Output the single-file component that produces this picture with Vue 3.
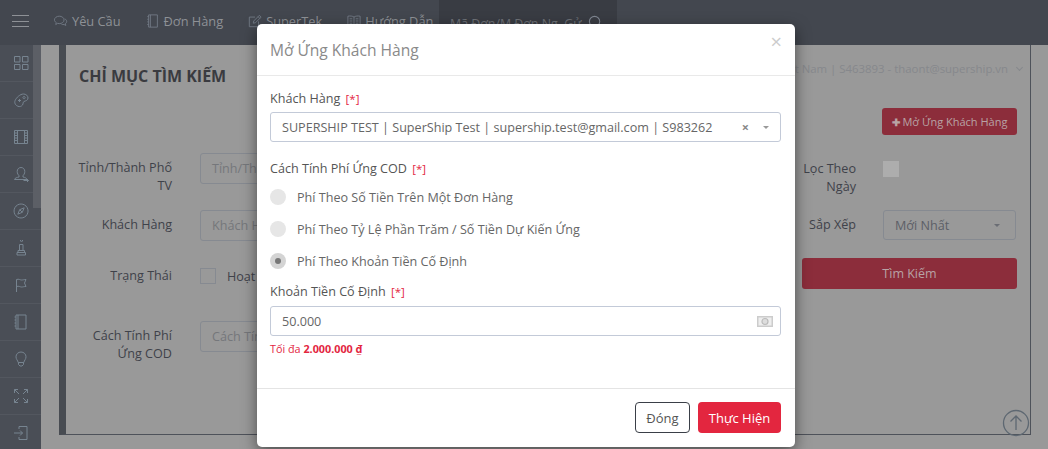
<script setup>
const navItems = [
  { label: 'Yêu Cầu', icon: 'chat' },
  { label: 'Đơn Hàng', icon: 'book' },
  { label: 'SuperTek', icon: 'edit' },
  { label: 'Hướng Dẫn', icon: 'guide' }
]

const sideIcons = ['grid', 'palette', 'film', 'user', 'compass', 'chess', 'flag', 'book', 'bulb', 'expand', 'login']

const iconPaths = {
  chat: 'M6 2.500c3 0 5.500 1.900 5.500 4.300S9 11 6 11c-.7 0-1.300-.1-1.900-.3L2 12l.5-2.300C1.300 8.900.5 7.900.5 6.800.5 4.400 3 2.500 6 2.500zM12.300 5.500c1.300.7 2.200 1.800 2.200 3 0 1-.6 1.900-1.500 2.600l.5 2-2-1.100c-1 .2-2 .1-2.900-.2',
  book: 'M3 1h10v14H3zM1.500 3H3M1.500 6H3M1.500 9H3M1.500 12H3M5 1v14',
  edit: 'M12 8.500V14.500H1.500V3.500H8M6 10.500l.5-2.500L13 1.500l2 2L8.500 10zM11.500 3l2 2',
  guide: 'M8 3.500C6.500 2.300 3.500 2 1 2.500v10.500c2.500-.5 5.500-.2 7 1 1.500-1.200 4.500-1.500 7-1V2.500C12.500 2 9.500 2.300 8 3.500zM8 3.500V14M3 5.500h3M3 8h3M3 10.500h3M10 5.500h3M10 8h3M10 10.500h3',
  grid: 'M1.500 1.500h5.500v5.500H1.500zM9.500 1.500h5.500v5.500H9.500zM1.500 9.500h5.500v5H1.500zM9.500 9.500h5.500v5H9.500z',
  palette: 'M10.500 2c2.500 0 4.500 1.800 4.500 4 0 2.500-2.500 2.800-4 3.500-1.300.6-.5 2-1.500 3.500-1 1.400-3 2-4.500 1.300C2.500 13.300 1 11 2.200 8.300 3.300 5.800 7 2 10.500 2zM5 8.500h3M6.500 7v3M11 4.500a1.100 1.100 0 1 0 .1 0z',
  film: 'M1.500 1.500h13v13h-13zM4.500 1.500v13M11.500 1.500v13M1.500 4h3M1.500 6.500h3M1.500 9h3M1.500 11.500h3M11.500 4h3M11.500 6.500h3M11.500 9h3M11.500 11.500h3',
  user: 'M8 1.500c2.300 0 3.800 1.700 3.800 4 0 2-1 3.400-1.800 4.200v1.300c2 .5 3.500.8 4 2.500H1.500c.5-1.700 2.500-2 4.500-2.500V9.700C5.200 8.900 4.200 7.500 4.200 5.500c0-2.300 1.500-4 3.800-4zM10.500 14.500h5M14 13l1.500 1.500L14 16',
  compass: 'M8 1a7 7 0 1 0 .1 0zM11.200 4.800L9.300 9.300 4.800 11.200 6.700 6.700zM6.700 6.700l2.600 2.600',
  chess: 'M8.500 1.500a1 1 0 1 1 .1 0zM6.500 4.500h3.500v6H6.500zM5 10.500h6.500v2H5zM4 12.500h8.500V15H4z',
  flag: 'M3.500 15V2.500c2.500-.8 3.500.5 5 .5s2.500-.5 4.500-.5L11.500 6l1.500 3.500c-2 0-3 .5-4.500.5s-2.500-1.300-5-.5',
  bulb: 'M8 1c2.800 0 5 2.100 5 4.800 0 2.400-1.700 3.500-2.200 5.700H5.200C4.700 9.300 3 8.200 3 5.800 3 3.100 5.200 1 8 1zM5.500 11.500v2L7 15h2l1.500-1.500v-2',
  expand: 'M1.500 5V1.500H5M1.500 1.500L6 6M14.500 5V1.500H11M14.500 1.500L10 6M1.500 11v3.500H5M1.500 14.500L6 10M14.500 11v3.500H11M14.500 14.500L10 10',
  login: 'M6 4V1.500h8v13H6V12M1 8h8.500M7 5.500L9.500 8 7 10.500'
}
</script>

<template>
  <div class="page">
    <header class="topbar">
      <button class="burger" type="button"><span></span><span></span><span></span></button>
      <nav class="nav">
        <a v-for="item in navItems" :key="item.label" class="nav__item">
          <svg class="nav__icon" viewBox="0 0 16 16"><path :d="iconPaths[item.icon]" /></svg>
          {{ item.label }}
        </a>
      </nav>
      <div class="search">
        <span class="search__text">Mã Đơn/M Đơn Ng. Gử</span>
        <svg class="search__icon" viewBox="0 0 16 16"><circle cx="7" cy="7" r="5.500" /><path d="M11 11l4 4" /></svg>
      </div>
    </header>

    <div class="layout">
      <aside class="sidebar">
        <div class="sidebar__scroll"></div>
        <div v-for="(icon, i) in sideIcons" :key="i" class="sidebar__item">
          <svg viewBox="0 0 16 16"><path :d="iconPaths[icon]" /></svg>
        </div>
      </aside>

      <main class="main">
        <section class="card">
          <div class="card__head">
            <h2 class="card__title">CHỈ MỤC TÌM KIẾM</h2>
            <div class="account">Việt Nam | S463893 - thaont@supership.vn <span class="account__caret"></span></div>
          </div>
          <div class="card__action">
            <button class="btn-red btn-red--small" type="button"><b class="plus">✚</b> Mở Ứng Khách Hàng</button>
          </div>
          <div class="filters">
            <div class="filters__col">
              <div class="row row--first">
                <label class="row__label">Tỉnh/Thành Phố<br />TV</label>
                <div class="fake-input">Tỉnh/Thà</div>
              </div>
              <div class="row">
                <label class="row__label">Khách Hàng</label>
                <div class="fake-input">Khách Hàng</div>
              </div>
              <div class="row row--check">
                <label class="row__label">Trạng Thái</label>
                <span class="checkbox"></span>
                <span class="check-text">Hoạt Động</span>
              </div>
              <div class="row row--last">
                <label class="row__label">Cách Tính Phí Ứng COD</label>
                <div class="fake-input">Cách Tính</div>
              </div>
            </div>
            <div class="filters__right">
              <div class="rrow rrow--date">
                <label class="rrow__label">Lọc Theo Ngày</label>
                <span class="checkbox checkbox--fill"></span>
              </div>
              <div class="rrow rrow--sort">
                <label class="rrow__label">Sắp Xếp</label>
                <div class="sort">Mới Nhất<span class="caret"></span></div>
              </div>
              <button class="btn-red btn-red--wide" type="button">Tìm Kiếm</button>
            </div>
          </div>
        </section>
        <div class="to-top">
          <svg viewBox="0 0 28 28"><circle cx="14" cy="14" r="12.500" /><path d="M14 21V7M8.500 12.500L14 7l5.500 5.500" /></svg>
        </div>
      </main>
    </div>

    <div class="modal-wrap">
      <div class="modal">
        <div class="modal__head">
          <h3 class="modal__title">Mở Ứng Khách Hàng</h3>
          <span class="modal__close">×</span>
        </div>
        <div class="modal__body">
          <div class="field-label">Khách Hàng <em>[*]</em></div>
          <div class="select">
            <span class="select__text">SUPERSHIP TEST | SuperShip Test | supership.test@gmail.com | S983262</span>
            <span class="select__clear">×</span>
            <span class="caret caret--modal"></span>
          </div>

          <div class="field-label field-label--fee">Cách Tính Phí Ứng COD <em>[*]</em></div>
          <div class="radio"><span class="radio__dot"></span>Phí Theo Số Tiền Trên Một Đơn Hàng</div>
          <div class="radio"><span class="radio__dot"></span>Phí Theo Tỷ Lệ Phần Trăm / Số Tiền Dự Kiến Ứng</div>
          <div class="radio"><span class="radio__dot radio__dot--on"></span>Phí Theo Khoản Tiền Cố Định</div>

          <div class="field-label field-label--amount">Khoản Tiền Cố Định <em>[*]</em></div>
          <div class="select">
            <span class="select__text">50.000</span>
            <svg class="money" viewBox="0 0 16 11">
              <rect x="0" y="0" width="16" height="11" fill="#ccc" />
              <rect x="1.500" y="1.500" width="13" height="8" fill="#eee" />
              <circle cx="8" cy="5.500" r="3" fill="#ddd" stroke="#bbb" stroke-width="1.200" />
            </svg>
          </div>
          <div class="hint">Tối đa <b>2.000.000 ₫</b></div>
        </div>
        <div class="modal__foot">
          <button class="btn-close" type="button">Đóng</button>
          <button class="btn-go" type="button">Thực Hiện</button>
        </div>
      </div>
    </div>
  </div>
</template>

<style>
html, body { margin: 0; padding: 0; overflow: hidden; }
</style>

<style scoped>
.page {
  position: relative;
  width: 1048px;
  height: 449px;
  overflow: hidden;
  background: #999;
  font-family: "Open Sans", sans-serif;
  font-size: 12.600px;
  color: #3b3f47;
}

.topbar {
  display: flex;
  align-items: flex-start;
  height: 45px;
  background: #43474f;
  color: #8e9196;
}

.burger {
  display: flex;
  flex-direction: column;
  gap: 4.500px;
  width: 17px;
  margin: 15px 25px 0 12px;
  padding: 0;
  background: none;
  border: none;
}

.burger span {
  height: 1px;
  background: #8e9196;
}

.nav {
  display: flex;
  gap: 25px;
  padding-top: 11px;
  width: 385px;
}

.nav__item {
  display: flex;
  align-items: center;
  gap: 4px;
  font-size: 12.800px;
  line-height: 20px;
  white-space: nowrap;
}

.nav__icon {
  flex: none;
  width: 14px;
  height: 14px;
  fill: none;
  stroke: #737c87;
  stroke-width: 1;
}

.search {
  display: flex;
  justify-content: space-between;
  flex: none;
  width: 178px;
  height: 45px;
  padding: 15px 14px 0 11px;
  box-sizing: border-box;
  background: #393c43;
  color: #6f7278;
  font-size: 12.400px;
  white-space: nowrap;
}

.search__icon {
  width: 15px;
  height: 15px;
  fill: none;
  stroke: #7f8691;
  stroke-width: 1.200;
}

.layout {
  display: flex;
  height: 404px;
}

.sidebar {
  position: relative;
  flex: none;
  width: 41px;
  background: #4a4e56;
}

.sidebar__scroll {
  position: absolute;
  top: 0;
  right: 0;
  width: 8px;
  height: 163px;
  background: #5c5f66;
}

.sidebar__item {
  display: flex;
  align-items: center;
  justify-content: center;
  width: 41px;
  height: 37px;
  box-sizing: border-box;
  border-bottom: 1px solid #53575f;
}

.sidebar__item svg {
  width: 16px;
  height: 16px;
  fill: none;
  stroke: #778490;
  stroke-width: 1;
}

.main {
  position: relative;
  flex: 1;
  padding: 0 17px 14px 18px;
}

.card {
  box-sizing: border-box;
  height: 390px;
  padding: 0 13px;
  border-left: 7px solid #484c52;
  border-right: 1px solid #4e525a;
  border-bottom: 1px solid #4e525a;
}

.card__head {
  display: flex;
  align-items: center;
  justify-content: space-between;
  height: 61px;
}

.card__title {
  margin: 0;
  font-size: 16px;
  font-weight: 700;
  color: #3a3b40;
}

.account {
  align-self: flex-start;
  margin: 16px -5px 0 0;
  color: #86888c;
  font-size: 11.400px;
  white-space: nowrap;
}

.account__caret {
  display: inline-block;
  width: 4px;
  height: 4px;
  margin: 0 0 3px 6px;
  border-right: 1px solid #86888c;
  border-bottom: 1px solid #86888c;
  transform: rotate(45deg);
}

.card__action {
  display: flex;
  justify-content: flex-end;
  margin-top: 2px;
}

.btn-red {
  border: none;
  border-radius: 3px;
  background: #8c2d3b;
  color: #b8a3a5;
  font: inherit;
}

.btn-red--small {
  width: 135px;
  height: 27px;
  padding: 0;
  font-size: 11px;
  white-space: nowrap;
}

.plus {
  font-size: 10px;
}

.filters {
  display: flex;
  justify-content: space-between;
  margin-top: 18px;
}

.row {
  display: flex;
  align-items: flex-start;
  gap: 28px;
  margin-bottom: 26px;
}

.row__label {
  flex: none;
  width: 96px;
  margin-left: -3px;
  text-align: right;
  line-height: 18px;
  color: #3f424a;
  padding-top: 6px;
}

.fake-input {
  box-sizing: border-box;
  width: 180px;
  height: 31px;
  padding: 0 11px;
  line-height: 29px;
  border: 1px solid #868a91;
  border-radius: 3px;
  color: #75777b;
  white-space: nowrap;
  overflow: hidden;
}

.row--first { margin-bottom: 15px; }

.row--check {
  align-items: center;
  margin-bottom: 36px;
}

.row--check .row__label { padding-top: 0; }

.checkbox {
  flex: none;
  width: 14px;
  height: 14px;
  border: 1px solid #868a91;
}

.check-text {
  margin-left: -17px;
  color: #3f424a;
}

.filters__right {
  display: flex;
  flex-direction: column;
  width: 215px;
}

.rrow {
  display: flex;
  gap: 27px;
}

.rrow__label {
  flex: none;
  width: 54px;
  text-align: right;
  line-height: 18px;
  color: #3f424a;
}

.rrow--date { height: 57px; }
.rrow--date .rrow__label { margin-top: 7px; }

.rrow--sort {
  align-items: center;
  height: 30px;
  margin-bottom: 18px;
}

.checkbox--fill {
  width: 16px;
  height: 16px;
  margin-top: 8px;
  border: none;
  background: #adadad;
}

.sort {
  display: flex;
  align-items: center;
  justify-content: space-between;
  box-sizing: border-box;
  width: 133px;
  height: 30px;
  padding: 0 15px 0 11px;
  border: 1px solid #868a91;
  border-radius: 3px;
  color: #5c5f67;
}

.caret {
  width: 0;
  height: 0;
  border-left: 3.500px solid transparent;
  border-right: 3.500px solid transparent;
  border-top: 3.500px solid #6a6d74;
}

.btn-red--wide {
  width: 215px;
  height: 31px;
  padding: 0;
  font-size: 12.500px;
}

.to-top {
  position: absolute;
  right: 18px;
  bottom: 12px;
  width: 28px;
  height: 28px;
}

.to-top svg {
  display: block;
  fill: none;
  stroke: #5e6872;
  stroke-width: 1.300;
}

.modal-wrap {
  position: absolute;
  top: 24px;
  left: 257px;
}

.modal {
  box-sizing: border-box;
  width: 538px;
  height: 423px;
  background: #fff;
  border-radius: 5px;
  box-shadow: 0 5px 15px rgba(0, 0, 0, 0.5);
  color: #555;
}

.modal__head {
  display: flex;
  align-items: center;
  justify-content: space-between;
  height: 51px;
  padding: 0 13px;
  border-bottom: 1px solid #e9e9e9;
}

.modal__title {
  margin: 0;
  font-size: 15.600px;
  font-weight: 400;
  color: #8a8a8a;
}

.modal__close {
  align-self: flex-start;
  margin-top: 8px;
  font-size: 20px;
  line-height: 1;
  color: #ccc;
}

.modal__body {
  height: 313px;
  padding: 13px 14px 0 13px;
  box-sizing: border-box;
  border-bottom: 1px solid #e4e4e4;
}

.field-label {
  height: 23px;
  line-height: 20px;
  color: #555;
}

.field-label em {
  margin-left: 2px;
  font-style: normal;
  font-size: 11.500px;
  color: #e3263f;
}

.field-label--fee { margin-top: 17px; height: 22px; }
.field-label--amount { margin-top: 5px; height: 24px; }

.select {
  display: flex;
  align-items: center;
  box-sizing: border-box;
  height: 30px;
  padding: 0 11px;
  border: 1px solid #c3cad8;
  border-radius: 3px;
}

.select .money { margin-right: -4px; }

.select__text {
  flex: 1;
  white-space: nowrap;
  color: #666;
}

.select__clear {
  margin-right: 14px;
  font-weight: 700;
  color: #888;
}

.caret--modal { border-top-color: #999; }

.radio {
  display: flex;
  align-items: center;
  gap: 11px;
  height: 32px;
  color: #666;
}

.radio__dot {
  display: flex;
  align-items: center;
  justify-content: center;
  width: 16px;
  height: 16px;
  border-radius: 50%;
  background: #e6e6e6;
}

.radio__dot--on { background: #d4d4d4; }

.radio__dot--on::after {
  content: "";
  width: 6px;
  height: 6px;
  border-radius: 50%;
  background: #777;
}

.money {
  width: 16px;
  height: 11px;
}

.hint {
  margin-top: 5px;
  font-size: 10.800px;
  color: #e3263f;
}

.modal__foot {
  display: flex;
  justify-content: flex-end;
  gap: 8px;
  padding: 13px 14px 0 0;
}

.btn-close,
.btn-go {
  height: 31px;
  padding: 0;
  border-radius: 4px;
  font: inherit;
  font-size: 13px;
}

.btn-close {
  width: 55px;
  background: #fff;
  border: 1px solid #3a3f47;
  color: #555;
}

.btn-go {
  width: 83px;
  background: #e3263f;
  border: none;
  color: #fff;
}
</style>
